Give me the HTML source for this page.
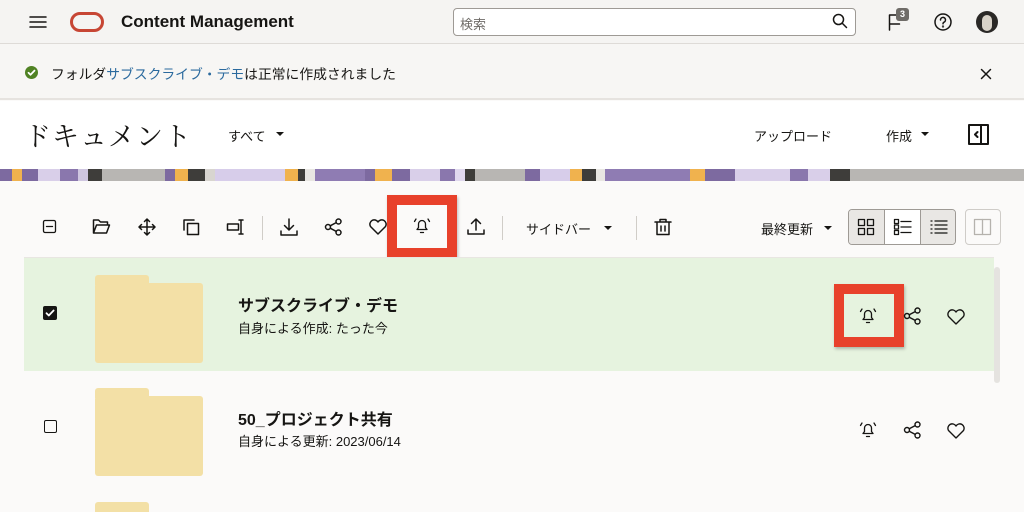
<!DOCTYPE html>
<html><head><meta charset="utf-8"><style>
*{box-sizing:border-box;margin:0;padding:0}
body{width:1024px;height:505px;overflow:hidden;background:#fbfaf9;font-family:"Liberation Sans","Noto Sans CJK JP",sans-serif;color:#161513;position:relative}
.abs{position:absolute}
svg{position:absolute;fill:none;stroke:#161513;stroke-width:1.5;stroke-linecap:round;stroke-linejoin:round}
.hdr{left:0;top:0;width:1024px;height:44px;background:#f5f4f2;border-bottom:1px solid #dedbd7}
.note{left:0;top:44px;width:1024px;height:56px;background:#f7f6f4;border-bottom:2px solid #e6e3df}
.title{left:0;top:101px;width:1024px;height:68px;background:#fff}
.banner{left:0;top:169px;width:1024px;height:12px;background:linear-gradient(90deg,#7d6aa0 0 12px,#f0b24e 12px 22px,#7d6aa0 22px 38px,#d9cfe9 38px 60px,#8a77ad 60px 78px,#cfc6e0 78px 88px,#3e3d3a 88px 102px,#b8b6b3 102px 165px,#7d6aa0 165px 175px,#f0b24e 175px 188px,#3e3d3a 188px 205px,#d8d5d0 205px 215px,#d7cdea 215px 285px,#f0b24e 285px 298px,#3e3d3a 298px 305px,#e8e6e2 305px 315px,#8f7cb3 315px 365px,#7d6aa0 365px 375px,#f0b24e 375px 392px,#7d6aa0 392px 410px,#d9cfe9 410px 440px,#8a77ad 440px 455px,#e0d8ee 455px 465px,#3e3d3a 465px 475px,#b8b6b3 475px 525px,#7d6aa0 525px 540px,#d7cdea 540px 570px,#f0b24e 570px 582px,#3e3d3a 582px 596px,#e8e6e2 596px 605px,#8f7cb3 605px 690px,#f0b24e 690px 705px,#7d6aa0 705px 735px,#d9cfe9 735px 790px,#8a77ad 790px 808px,#d9cfe9 808px 830px,#3e3d3a 830px 850px,#b8b6b3 850px 1024px)}
.sep{top:216px;width:1px;height:24px;background:#d0cdc8}
.row1{left:24px;top:258px;width:970px;height:113px;background:#e6f3df}
.folder{width:108px;height:80px;background:#f3e0a6;border-radius:3px}
.tab{width:54px;height:10px;background:#f3e0a6;border-radius:3px 3px 0 0}
.red{border:10px solid #e8412b;box-shadow:1px 2px 3px rgba(0,0,0,.25)}
.t13{font-size:13px}
</style></head><body>
<div class="abs hdr"></div>
<svg style="left:29px;top:14px" width="18" height="16"><path d="M1 3h16M1 8h16M1 13h16"/></svg>
<div class="abs" style="left:70px;top:12px;width:34px;height:20px;border:3.5px solid #c74634;border-radius:10px"></div>
<div class="abs" style="left:121px;top:12px;font-size:17px;font-weight:bold">Content Management</div>
<div class="abs" style="left:453px;top:8px;width:403px;height:28px;background:#fff;border:1px solid #9e9a95;border-radius:4px"></div>
<div class="abs t13" style="left:460px;top:14px;color:#6f6c68">検索</div>
<svg style="left:832px;top:13px" width="16" height="16"><circle cx="6.5" cy="6.5" r="5"/><path d="M10.5 10.5l4 4"/></svg>
<svg style="left:888px;top:13px" width="14" height="18"><path d="M1.5 17V2h9M1.5 11h10"/></svg>
<div class="abs" style="left:896px;top:8px;width:13px;height:13px;background:#6f6c68;border-radius:3px;color:#fff;font-size:9px;font-weight:bold;text-align:center;line-height:13px">3</div>
<svg style="left:933px;top:12px" width="20" height="20"><circle cx="10" cy="10" r="8"/><path d="M7.5 8a2.5 2.5 0 1 1 3.5 2.2c-.8.4-1 .9-1 1.6"/><circle cx="10" cy="14.5" r=".4"/></svg>
<div class="abs" style="left:976px;top:11px;width:22px;height:22px;border-radius:50%;background:#2a2826"></div>
<div class="abs" style="left:982px;top:15px;width:10px;height:16px;border-radius:5px;background:#d8d2c8"></div>

<div class="abs note"></div>
<div class="abs" style="left:25px;top:66px;width:13px;height:13px;border-radius:50%;background:#508223"></div>
<svg style="left:25px;top:66px;stroke:#fff;stroke-width:1.8" width="13" height="13"><path d="M3.5 6.8l2 2 4-4.2"/></svg>
<div class="abs" style="left:51px;top:63px;font-size:13.8px">フォルダ<span style="color:#2b6a9e">サブスクライブ・デモ</span>は正常に作成されました</div>
<svg style="left:980px;top:68px" width="12" height="12"><path d="M1.5 1.5l9 9M10.5 1.5l-9 9"/></svg>

<div class="abs title"></div>
<div class="abs" style="left:24px;top:115px;font-size:27px;font-family:'Noto Serif CJK SC',serif;letter-spacing:1px">ドキュメント</div>
<div class="abs t13" style="left:228px;top:126px">すべて</div>
<svg style="left:275px;top:131px;fill:#161513;stroke:none" width="10" height="6"><path d="M1 1h8l-4 4z"/></svg>
<div class="abs t13" style="left:754px;top:126px">アップロード</div>
<div class="abs t13" style="left:886px;top:126px">作成</div>
<svg style="left:920px;top:131px;fill:#161513;stroke:none" width="10" height="6"><path d="M1 1h8l-4 4z"/></svg>
<svg style="left:968px;top:124px;stroke-width:2" width="22" height="22"><rect x="1" y="1" width="19" height="19"/><path d="M13 1v19M9.5 8l-2.5 2.5 2.5 2.5"/></svg>

<div class="abs banner"></div>

<svg style="left:42px;top:219px;stroke-width:1.3" width="16" height="16"><rect x="1.5" y="1.5" width="12" height="12" rx="1.5"/><path d="M4.5 7.5h6"/></svg>
<svg style="left:92px;top:218px" width="20" height="18"><path d="M1.5 15V2h5l2 2h7v3M1.5 15l3-8h13l-3 8z"/></svg>
<svg style="left:138px;top:218px" width="18" height="18"><path d="M9 1v16M1 9h16M6.5 3.5L9 1l2.5 2.5M6.5 14.5L9 17l2.5-2.5M3.5 6.5L1 9l2.5 2.5M14.5 6.5L17 9l-2.5 2.5"/></svg>
<svg style="left:182px;top:218px" width="18" height="18"><path d="M2 12V2h10"/><rect x="5.5" y="5.5" width="11" height="11"/></svg>
<svg style="left:226px;top:218px" width="20" height="18"><path d="M1.5 6h11v6h-11zM15 2v14M13 2h4M13 16h4"/></svg>
<div class="abs sep" style="left:262px"></div>
<svg style="left:279px;top:217px" width="20" height="20"><path d="M10 2v11M5.5 8.5L10 13l4.5-4.5M2 14v4h16v-4"/></svg>
<svg style="left:324px;top:218px" width="20" height="18"><circle cx="4" cy="9" r="2.5"/><circle cx="14.5" cy="3.5" r="2.5"/><circle cx="14.5" cy="14.5" r="2.5"/><path d="M6.2 7.8l6-3.2M6.2 10.2l6 3.2"/></svg>
<svg style="left:368px;top:218px" width="20" height="18"><path d="M10 16L2.5 8.5a4 4 0 0 1 7.5-4.5 4 4 0 0 1 7.5 4.5z"/></svg>
<div class="abs red" style="left:387px;top:195px;width:70px;height:63px"></div>
<svg style="left:412px;top:216px;stroke-width:1.3" width="20" height="20"><path d="M5 13.5h10l-1.5-2V8a3.5 3.5 0 0 0-7 0v3.5zM8.5 16.5h3M2.5 5.5L4 3M17.5 5.5L16 3"/></svg>
<svg style="left:466px;top:216px" width="20" height="20"><path d="M10 14V3M5.5 7.5L10 3l4.5 4.5M2 14v4h16v-4"/></svg>
<div class="abs sep" style="left:502px"></div>
<div class="abs t13" style="left:526px;top:219px">サイドバー</div>
<svg style="left:603px;top:225px;fill:#161513;stroke:none" width="10" height="6"><path d="M1 1h8l-4 4z"/></svg>
<div class="abs sep" style="left:636px"></div>
<svg style="left:654px;top:218px" width="18" height="18"><path d="M1 4h16M6 4V1.5h6V4M3 4v12.5h12V4M7 8v5M11 8v5"/></svg>
<div class="abs t13" style="left:761px;top:219px">最終更新</div>
<svg style="left:823px;top:225px;fill:#161513;stroke:none" width="10" height="6"><path d="M1 1h8l-4 4z"/></svg>
<div class="abs" style="left:848px;top:209px;width:108px;height:36px;border:1px solid #9e9a95;border-radius:4px;background:#fff;overflow:hidden">
 <div class="abs" style="left:0;top:0;width:36px;height:34px;background:#e9e7e4;border-right:1px solid #9e9a95"></div>
 <div class="abs" style="left:71px;top:0;width:36px;height:34px;background:#e9e7e4;border-left:1px solid #9e9a95"></div>
</div>
<svg style="left:857px;top:218px;stroke-width:1.3" width="18" height="18"><rect x="1.5" y="1.5" width="6" height="6"/><rect x="10.5" y="1.5" width="6" height="6"/><rect x="1.5" y="10.5" width="6" height="6"/><rect x="10.5" y="10.5" width="6" height="6"/></svg>
<svg style="left:893px;top:218px;stroke-width:1.3" width="20" height="18"><rect x="1.5" y="1.5" width="4" height="4"/><rect x="1.5" y="7" width="4" height="4"/><rect x="1.5" y="12.5" width="4" height="4"/><path d="M8 3.5h10M8 9h10M8 14.5h10"/></svg>
<svg style="left:929px;top:219px;stroke-width:1.3" width="20" height="16"><path d="M2 2h1M2 6h1M2 10h1M2 14h1M6 2h12M6 6h12M6 10h12M6 14h12"/></svg>
<div class="abs" style="left:965px;top:209px;width:36px;height:36px;border:1px solid #cfccc8;border-radius:4px;background:#fbfaf9"></div>
<svg style="left:973px;top:218px;stroke:#b5b2ad;stroke-width:1.3" width="20" height="18"><rect x="1.5" y="1.5" width="16" height="15"/><path d="M9.5 1.5v15"/></svg>

<div class="abs" style="left:24px;top:257px;width:970px;height:1px;background:#e8e6e2"></div>
<div class="abs row1"></div>
<div class="abs" style="left:994px;top:267px;width:6px;height:116px;background:#e5e3e0;border-radius:3px"></div>
<div class="abs" style="left:43px;top:306px;width:14px;height:14px;background:#161513;border-radius:2px"></div>
<svg style="left:43px;top:306px;stroke:#fff;stroke-width:1.8" width="14" height="14"><path d="M3.5 7.2l2.3 2.3 4.8-5"/></svg>
<div class="abs tab" style="left:95px;top:275px"></div>
<div class="abs folder" style="left:95px;top:283px"></div>
<div class="abs" style="left:238px;top:292px;font-size:16px;font-weight:bold">サブスクライブ・デモ</div>
<div class="abs t13" style="left:238px;top:318px">自身による作成: たった今</div>
<div class="abs red" style="left:834px;top:284px;width:70px;height:63px"></div>
<svg style="left:858px;top:306px;stroke-width:1.3" width="20" height="20"><path d="M5 13.5h10l-1.5-2V8a3.5 3.5 0 0 0-7 0v3.5zM8.5 16.5h3M2.5 5.5L4 3M17.5 5.5L16 3"/></svg>
<svg style="left:903px;top:307px;stroke-width:1.4" width="20" height="18"><circle cx="4" cy="9" r="2.5"/><circle cx="14.5" cy="3.5" r="2.5"/><circle cx="14.5" cy="14.5" r="2.5"/><path d="M6.2 7.8l6-3.2M6.2 10.2l6 3.2"/></svg>
<svg style="left:946px;top:308px;stroke-width:1.4" width="20" height="18"><path d="M10 16L2.5 8.5a4 4 0 0 1 7.5-4.5 4 4 0 0 1 7.5 4.5z"/></svg>

<div class="abs" style="left:44px;top:420px;width:13px;height:13px;border:1.5px solid #161513;border-radius:2px"></div>
<div class="abs tab" style="left:95px;top:388px"></div>
<div class="abs folder" style="left:95px;top:396px"></div>
<div class="abs" style="left:238px;top:406px;font-size:16px;font-weight:bold">50_プロジェクト共有</div>
<div class="abs t13" style="left:238px;top:431px">自身による更新: 2023/06/14</div>
<svg style="left:858px;top:420px;stroke-width:1.3" width="20" height="20"><path d="M5 13.5h10l-1.5-2V8a3.5 3.5 0 0 0-7 0v3.5zM8.5 16.5h3M2.5 5.5L4 3M17.5 5.5L16 3"/></svg>
<svg style="left:903px;top:421px;stroke-width:1.4" width="20" height="18"><circle cx="4" cy="9" r="2.5"/><circle cx="14.5" cy="3.5" r="2.5"/><circle cx="14.5" cy="14.5" r="2.5"/><path d="M6.2 7.8l6-3.2M6.2 10.2l6 3.2"/></svg>
<svg style="left:946px;top:422px;stroke-width:1.4" width="20" height="18"><path d="M10 16L2.5 8.5a4 4 0 0 1 7.5-4.5 4 4 0 0 1 7.5 4.5z"/></svg>

<div class="abs tab" style="left:95px;top:502px"></div>
</body></html>
